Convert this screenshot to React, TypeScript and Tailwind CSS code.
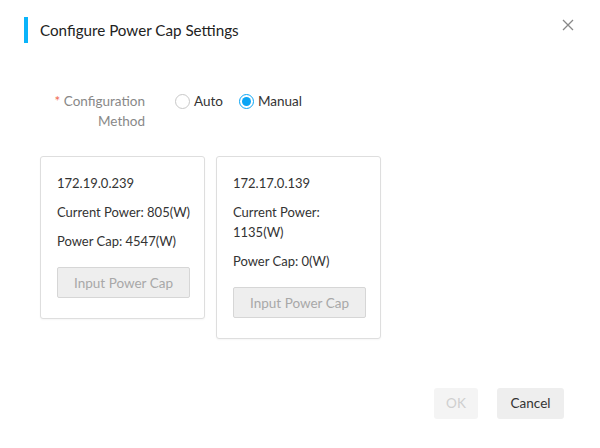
import React from "react";

function Radio({ checked, label }: { checked?: boolean; label: string }) {
  return (
    <label className="flex items-center gap-[4px] cursor-pointer">
      <span
        className={
          checked
            ? "w-[15px] h-[15px] rounded-full border border-[#0aa5f5] bg-white flex items-center justify-center"
            : "w-[15px] h-[15px] rounded-full border border-[#c8c8c8] bg-white"
        }
      >
        {checked && <span className="w-[9px] h-[9px] rounded-full bg-[#0aa5f5]" />}
      </span>
      <span className="text-[13.5px] text-[#333]">{label}</span>
    </label>
  );
}

function Card({ ip, power, cap }: { ip: string; power: React.ReactNode; cap: string }) {
  return (
    <div className="w-[165px] border border-[#dedede] rounded-[3px] pt-[16px] pb-[20px] px-[16px] text-[13px] leading-[20px] text-[#333] bg-white shadow-[0_1px_2px_rgba(0,0,0,0.04)]">
      <div>{ip}</div>
      <div className="mt-[9px]">{power}</div>
      <div className="mt-[9px]">{cap}</div>
      <button className="mt-[16px] w-[133px] h-[31px] bg-[#eeeeee] border border-[#d6d6d6] rounded-[2px] text-[13.5px] text-[#a8a8a8]">
        Input Power Cap
      </button>
    </div>
  );
}

export default function App() {
  return (
    <div
      className="w-[600px] h-[448px] bg-white relative"
      style={{ fontFamily: "Lato, 'Noto Sans', sans-serif" }}
    >
      <div className="flex items-center pt-[17px] pl-[24px]">
        <div className="w-[4px] h-[26px] bg-[#0ab4fa]" />
        <div className="ml-[12px] text-[15.2px] text-[#222]">Configure Power Cap Settings</div>
      </div>
      <button className="absolute top-[18px] right-[25px] w-[13px] h-[13px] text-[#888]">
        <svg viewBox="0 0 12 12" width="12" height="12" stroke="currentColor" strokeWidth="1.3" fill="none">
          <path d="M1 1 L11 11 M11 1 L1 11" />
        </svg>
      </button>

      <div className="flex items-start mt-[48px] pl-[40px]">
        <div className="w-[105px] text-right text-[13.5px] leading-[20px] text-[#888]">
          <span className="text-[#f0664d]">*</span> Configuration Method
        </div>
        <div className="flex items-center gap-[16px] ml-[30px] h-[20px]">
          <Radio label="Auto" />
          <Radio checked label="Manual" />
        </div>
      </div>

      <div className="flex items-start gap-[11px] mt-[25px] pl-[40px]">
        <Card ip="172.19.0.239" power={<span className="whitespace-nowrap">Current Power: 805(W)</span>} cap="Power Cap: 4547(W)" />
        <Card ip="172.17.0.139" power={<>Current Power:<br />1135(W)</>} cap="Power Cap: 0(W)" />
      </div>

      <div className="absolute right-[36px] bottom-[29px] flex gap-[19px]">
        <button className="w-[44px] h-[31px] rounded-[3px] bg-[#f4f4f4] text-[13.5px] text-[#cfcfcf]">OK</button>
        <button className="w-[67px] h-[31px] rounded-[3px] bg-[#eeeeee] text-[13.5px] text-[#333]">Cancel</button>
      </div>
    </div>
  );
}
